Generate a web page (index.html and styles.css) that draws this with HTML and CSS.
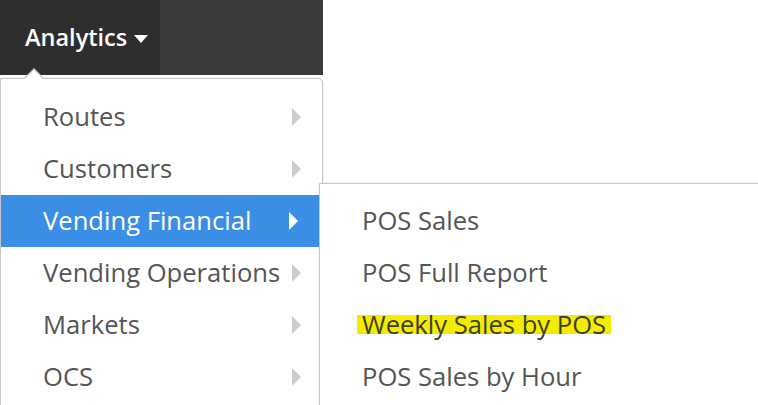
FILE: index.html
```html
<!DOCTYPE html>
<html>
<head>
<meta charset="utf-8">
<link rel="stylesheet" href="styles.css">
</head>
<body>
<div class="nav">
  <div class="navbar">
    <div class="nav-item active">
      <span class="nav-label">Analytics</span>
      <span class="nav-caret"></span>
    </div>
    <div class="nav-rest"></div>
  </div>
  <ul class="menu">
    <li class="menu-item"><span class="label">Routes</span><span class="arrow"></span></li>
    <li class="menu-item"><span class="label">Customers</span><span class="arrow"></span></li>
    <li class="menu-item open"><span class="label">Vending Financial</span><span class="arrow"></span>
      <ul class="submenu">
        <li class="sub-item">POS Sales</li>
        <li class="sub-item">POS Full Report</li>
        <li class="sub-item"><span class="marker">Weekly Sales by POS</span></li>
        <li class="sub-item">POS Sales by Hour</li>
      </ul>
    </li>
    <li class="menu-item"><span class="label">Vending Operations</span><span class="arrow"></span></li>
    <li class="menu-item"><span class="label">Markets</span><span class="arrow"></span></li>
    <li class="menu-item"><span class="label">OCS</span><span class="arrow"></span></li>
  </ul>
</div>
</body>
</html>
```

FILE: styles.css
```css
body {
  margin: 0;
  padding: 0;
  background: #ffffff;
  font-family: "Open Sans", "Liberation Sans", sans-serif;
}

.nav {
  width: 323px;
  display: flex;
  flex-direction: column;
}

.navbar {
  display: flex;
  height: 75px;
  background: #3a3a3a;
}

.nav-item {
  width: 160px;
  display: flex;
  align-items: center;
  padding-left: 25px;
  padding-bottom: 1px;
  box-sizing: border-box;
  color: #ffffff;
  font-size: 23.5px;
  font-weight: 600;
}

.nav-item.active {
  background: #2e2e2e;
}

.nav-caret {
  width: 0;
  height: 0;
  margin-left: 7px;
  margin-top: 3px;
  border-left: 7px solid transparent;
  border-right: 7px solid transparent;
  border-top: 8px solid #ffffff;
}

.nav-rest {
  flex: 1;
}

.menu {
  position: relative;
  width: 323px;
  height: 340px;
  box-sizing: border-box;
  margin: 3px 0 0;
  padding: 12px 0 0;
  list-style: none;
  background: #ffffff;
  border: 1px solid #c8c8c8;
  border-radius: 0 5px 0 0;
  box-shadow: 0 0 2px rgba(0, 0, 0, 0.15);
}

.menu::before {
  content: "";
  position: absolute;
  top: -11px;
  left: 22px;
  width: 0;
  height: 0;
  border-left: 11px solid transparent;
  border-right: 11px solid transparent;
  border-bottom: 11px solid #c8c8c8;
}

.menu::after {
  content: "";
  position: absolute;
  top: -9px;
  left: 23px;
  width: 0;
  height: 0;
  border-left: 10px solid transparent;
  border-right: 10px solid transparent;
  border-bottom: 10px solid #ffffff;
}

.menu-item {
  position: relative;
  display: flex;
  align-items: center;
  height: 52px;
  padding-left: 42px;
  padding-right: 21px;
  padding-bottom: 1px;
  box-sizing: border-box;
  color: #555555;
  font-size: 25.6px;
}

.menu-item .label {
  flex: 1;
  white-space: nowrap;
}

.arrow {
  flex: none;
  width: 0;
  height: 0;
  border-top: 9px solid transparent;
  border-bottom: 9px solid transparent;
  border-left: 9px solid #cccccc;
}

.menu-item.open {
  background: #3a8ee6;
  color: #ffffff;
  margin-right: 3px;
}

.menu-item.open .arrow {
  border-left-color: #ffffff;
}

.submenu {
  position: absolute;
  top: -12px;
  left: 318px;
  width: 460px;
  height: 240px;
  box-sizing: border-box;
  margin: 0;
  padding: 11px 0 0;
  list-style: none;
  background: #ffffff;
  border: 1px solid #c8c8c8;
  border-radius: 0 5px 0 0;
  box-shadow: 0 0 2px rgba(0, 0, 0, 0.12);
}

.sub-item {
  display: flex;
  align-items: center;
  height: 52px;
  padding-left: 42px;
  padding-bottom: 1px;
  box-sizing: border-box;
  color: #555555;
  font-size: 25.6px;
  white-space: nowrap;
}

.marker {
  margin-left: -5px;
  padding: 0 5px;
  color: #40401c;
  background-image: linear-gradient(to bottom, transparent 0, transparent 22%, #f4ec00 22%, #f4ec00 78%, transparent 78%);
  background-repeat: no-repeat;
}
```
